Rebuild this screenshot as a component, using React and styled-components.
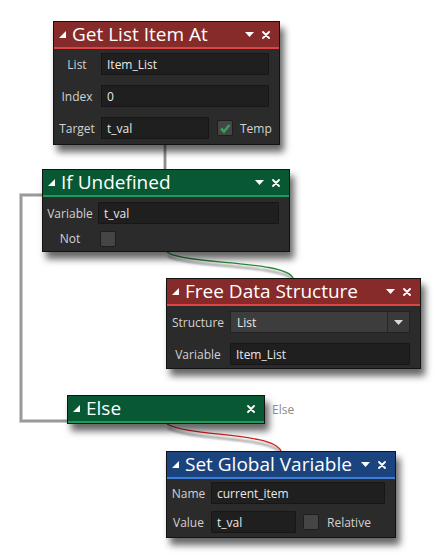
import React from "react";
import styled, { createGlobalStyle } from "styled-components";

const Global = createGlobalStyle`
  html, body { margin: 0; padding: 0; background: #ffffff; }
  body { font-family: "Open Sans", "Noto Sans", sans-serif; }
  * { box-sizing: border-box; }
`;

const Canvas = styled.div`
  position: relative;
  width: 442px;
  height: 559px;
  background: #ffffff;
  overflow: hidden;
`;

const Wires = styled.svg`
  position: absolute;
  left: 0;
  top: 0;
  width: 442px;
  height: 559px;
`;

const Node = styled.div`
  position: absolute;
  left: ${(p) => p.$x}px;
  top: ${(p) => p.$y}px;
  width: ${(p) => p.$w}px;
  background: #2b2b2b;
  border: 1px solid #131313;
  box-shadow: 4px 7px 7px rgba(0, 0, 0, 0.6);
`;

const Header = styled.div`
  height: 27px;
  display: flex;
  align-items: center;
  padding: 0 9px 0 5px;
  background: ${(p) => p.$bg};
  border-bottom: 2px solid ${(p) => p.$accent};
  color: #ffffff;
`;

const Title = styled.div`
  flex: 1;
  font-size: 19px;
  line-height: 1;
  margin-left: 6px;
  white-space: nowrap;
  padding-bottom: 1px;
`;

const HeadIcons = styled.div`
  display: flex;
  align-items: center;
  gap: 8px;
`;

const Body = styled.div`
  display: flex;
  flex-direction: column;
  gap: ${(p) => p.$gap}px;
  padding: ${(p) => p.$pt}px 10px ${(p) => p.$pb}px 4px;
`;

const Row = styled.div`
  display: flex;
  align-items: center;
  height: ${(p) => p.$h || 22}px;
`;

const Label = styled.div`
  width: ${(p) => p.$w}px;
  flex-shrink: 0;
  margin-right: 5px;
  text-align: center;
  font-size: 12px;
  color: #d2d2d2;
  white-space: nowrap;
`;

const Field = styled.div`
  height: 22px;
  ${(p) => (p.$w ? `width: ${p.$w}px; flex-shrink: 0;` : "flex: 1;")}
  display: flex;
  align-items: center;
  padding: 0 5px;
  background: #1f1f1f;
  border: 1px solid #171717;
  border-radius: 1px;
  color: #e8e8e8;
  font-size: 12px;
`;

const Select = styled.div`
  flex: 1;
  height: 22px;
  display: flex;
  align-items: stretch;
  background: #3d3d3d;
  border: 1px solid #222222;
  color: #e8e8e8;
  font-size: 12px;
`;

const SelectText = styled.div`
  flex: 1;
  display: flex;
  align-items: center;
  padding: 0 6px;
`;

const SelectButton = styled.div`
  width: 22px;
  display: flex;
  align-items: center;
  justify-content: center;
  border-left: 1px solid #262626;
  background: #3a3a3a;
`;

const Check = styled.div`
  width: 16px;
  height: 16px;
  flex-shrink: 0;
  margin-left: ${(p) => p.$ml || 0}px;
  background: #454545;
  border: 1px solid #1e1e1e;
  border-radius: 2px;
  display: flex;
  align-items: center;
  justify-content: center;
`;

const CheckLabel = styled.div`
  margin-left: ${(p) => p.$ml}px;
  font-size: 12px;
  color: #d2d2d2;
  white-space: nowrap;
`;

const PortLabel = styled.div`
  position: absolute;
  left: ${(p) => p.$x}px;
  top: ${(p) => p.$y}px;
  font-size: 12px;
  color: #8a8a8a;
`;

const Collapse = () => (
  <svg width="7" height="7" viewBox="0 0 7 7">
    <polygon points="7,0 7,7 0,7" fill="#ffffff" />
  </svg>
);

const Down = ({ c = "#ffffff" }) => (
  <svg width="9" height="5" viewBox="0 0 9 5">
    <polygon points="0,0 9,0 4.5,5" fill={c} />
  </svg>
);

const Close = () => (
  <svg width="8" height="8" viewBox="0 0 8 8">
    <path d="M1 1 L7 7 M7 1 L1 7" stroke="#ffffff" strokeWidth="1.8" strokeLinecap="round" />
  </svg>
);

const Tick = () => (
  <svg width="12" height="12" viewBox="0 0 12 12">
    <path d="M2 6.5 L5 9.5 L10.5 3" stroke="#2fa35c" strokeWidth="2.6" fill="none" />
  </svg>
);

const RED = { bg: "#862a2a", accent: "#de4444" };
const GREEN = { bg: "#085834", accent: "#1f9c5c" };
const BLUE = { bg: "#1b447f", accent: "#3d7ed8" };

const NodeHeader = ({ theme, title, menu = true }) => (
  <Header $bg={theme.bg} $accent={theme.accent}>
    <Collapse />
    <Title>{title}</Title>
    <HeadIcons>
      {menu && <Down />}
      <Close />
    </HeadIcons>
  </Header>
);

export default function App() {
  return (
    <>
      <Global />
      <Canvas>
        <Wires viewBox="0 0 442 559">
          <defs>
            <filter id="blur" x="-10%" y="-10%" width="120%" height="140%">
              <feGaussianBlur stdDeviation="1.2" />
            </filter>
          </defs>
          <g fill="none">
            <path d="M165 145 V169" stroke="#cfcfcf" strokeWidth="4" />
            <path d="M165 145 V169" stroke="#8e8e8e" strokeWidth="2" />
            <path d="M42 195 H21 V421 H67" stroke="#cccccc" strokeWidth="4" />
            <path d="M42 195 H21 V421 H67" stroke="#999999" strokeWidth="2" />
            <path d="M167 254 C185 266, 285 262, 293 279" stroke="#555" strokeWidth="2" filter="url(#blur)" opacity="0.6" transform="translate(1 2)" />
            <path d="M167 252 C185 265, 285 260, 293 278" stroke="#2b8a3c" strokeWidth="1.3" />
            <path d="M167 426 C190 439, 272 434, 281 452" stroke="#555" strokeWidth="2" filter="url(#blur)" opacity="0.6" transform="translate(1 2)" />
            <path d="M167 424 C190 437, 272 432, 281 451" stroke="#cf2424" strokeWidth="1.3" />
          </g>
        </Wires>

        <Node $x={53} $y={21} $w={227}>
          <NodeHeader theme={RED} title="Get List Item At" />
          <Body $gap={10} $pt={4} $pb={5}>
            <Row>
              <Label $w={38}>List</Label>
              <Field>Item_List</Field>
            </Row>
            <Row>
              <Label $w={38}>Index</Label>
              <Field>0</Field>
            </Row>
            <Row>
              <Label $w={38}>Target</Label>
              <Field $w={108}>t_val</Field>
              <Check $ml={8}>
                <Tick />
              </Check>
              <CheckLabel $ml={7}>Temp</CheckLabel>
            </Row>
          </Body>
        </Node>

        <Node $x={42} $y={169} $w={248}>
          <NodeHeader theme={GREEN} title="If Undefined" />
          <Body $gap={7} $pt={5} $pb={5}>
            <Row>
              <Label $w={46}>Variable</Label>
              <Field>t_val</Field>
            </Row>
            <Row $h={15}>
              <Label $w={46}>Not</Label>
              <Check $ml={2} />
            </Row>
          </Body>
        </Node>

        <Node $x={166} $y={278} $w={255}>
          <NodeHeader theme={RED} title="Free Data Structure" />
          <Body $gap={10} $pt={5} $pb={3}>
            <Row>
              <Label $w={54}>Structure</Label>
              <Select>
                <SelectText>List</SelectText>
                <SelectButton>
                  <Down c="#d8d8d8" />
                </SelectButton>
              </Select>
            </Row>
            <Row>
              <Label $w={54}>Variable</Label>
              <Field>Item_List</Field>
            </Row>
          </Body>
        </Node>

        <Node $x={67} $y={395} $w={198}>
          <NodeHeader theme={GREEN} title="Else" menu={false} />
        </Node>
        <PortLabel $x={272} $y={401}>Else</PortLabel>

        <Node $x={166} $y={451} $w={230}>
          <NodeHeader theme={BLUE} title="Set Global Variable" />
          <Body $gap={7} $pt={3} $pb={4}>
            <Row>
              <Label $w={35}>Name</Label>
              <Field>current_item</Field>
            </Row>
            <Row>
              <Label $w={35}>Value</Label>
              <Field $w={85}>t_val</Field>
              <Check $ml={7} />
              <CheckLabel $ml={8}>Relative</CheckLabel>
            </Row>
          </Body>
        </Node>
      </Canvas>
    </>
  );
}
